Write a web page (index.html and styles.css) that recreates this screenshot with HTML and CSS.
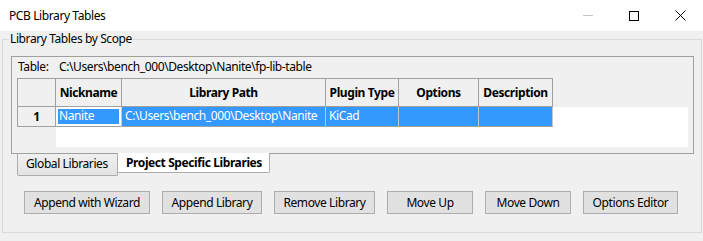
FILE: index.html
```html
<!DOCTYPE html>
<html>
<head>
<meta charset="utf-8">
<title>PCB Library Tables</title>
<link rel="stylesheet" href="styles.css">
</head>
<body>
<div class="window">
  <div class="titlebar">
    <span class="title">PCB Library Tables</span>
    <div class="controls">
      <span class="ctl"><svg width="10" height="1" viewBox="0 0 10 1"><rect width="10" height="1" fill="#c4c4c4"/></svg></span>
      <span class="ctl"><svg width="10" height="10" viewBox="0 0 10 10"><rect x="0.5" y="0.5" width="9" height="9" fill="none" stroke="#000" stroke-width="1"/></svg></span>
      <span class="ctl"><svg width="11" height="11" viewBox="0 0 11 11"><path d="M0.5 0.5L10.5 10.5M10.5 0.5L0.5 10.5" stroke="#000" stroke-width="1" fill="none"/></svg></span>
    </div>
  </div>
  <fieldset class="scope">
    <legend>Library Tables by Scope</legend>
    <div class="page">
      <div class="table-path"><span class="path-label">Table:</span><span>C:\Users\bench_000\Desktop\Nanite\fp-lib-table</span></div>
      <div class="grid">
        <div class="hdr corner"></div>
        <div class="hdr">Nickname</div>
        <div class="hdr">Library Path</div>
        <div class="hdr">Plugin Type</div>
        <div class="hdr">Options</div>
        <div class="hdr">Description</div>
        <div class="hdr-fill"></div>
        <div class="rowlabel">1</div>
        <div class="cell sel cursor">Nanite</div>
        <div class="cell sel">C:\Users\bench_000\Desktop\Nanite</div>
        <div class="cell sel">KiCad</div>
        <div class="cell sel"></div>
        <div class="cell sel"></div>
        <div class="row-fill"></div>
        <div class="label-fill"></div>
        <div class="empty"></div>
      </div>
    </div>
    <div class="tabs">
      <div class="tab tab-global">Global Libraries</div>
      <div class="tab tab-project active">Project Specific Libraries</div>
    </div>
    <div class="buttons">
      <button class="btn btn-wizard">Append with Wizard</button>
      <button class="btn btn-append">Append Library</button>
      <button class="btn btn-remove">Remove Library</button>
      <button class="btn btn-up">Move Up</button>
      <button class="btn btn-down">Move Down</button>
      <button class="btn btn-options">Options Editor</button>
    </div>
  </fieldset>
</div>
</body>
</html>
```
FILE: styles.css
```css
* { box-sizing: border-box; }
html, body { margin: 0; padding: 0; }
body {
  background: #f0f0f0;
  font-family: "Noto Sans", "Open Sans", sans-serif;
  font-size: 12px;
  letter-spacing: -0.4px;
  color: #000;
  width: 703px;
  height: 241px;
  overflow: hidden;
}
.window { width: 703px; height: 241px; }
.titlebar {
  height: 31px;
  background: #fff;
  display: flex;
  align-items: center;
  justify-content: space-between;
}
.title { padding-left: 9px; line-height: 16px; }
.controls { display: flex; height: 31px; }
.ctl {
  width: 46px;
  height: 31px;
  display: flex;
  align-items: center;
  justify-content: center;
}
.ctl svg { display: block; }

.scope {
  margin: 0 0 0 2px;
  width: 700px;
  padding: 0 0 18px 0;
  border: 1px solid #d9d9d9;
  min-width: 0;
}
.scope legend {
  margin-left: 6px;
  padding: 0 1px;
  line-height: 16px;
}
.page {
  margin: 9px 7px 0 8px;
  border: 1px solid #a0a0a0;
  padding: 0 5px 6px 5px;
}
.table-path {
  height: 21px;
  line-height: 20px;
  display: flex;
  padding-left: 1px;
}
.path-label { width: 41px; }

.grid {
  display: grid;
  grid-template-columns: 39px 66px 204px 73px 80px 74px 1fr;
  grid-template-rows: 29px 20px 1fr;
  height: 69px;
  background: #fff;
}
.hdr {
  background: #f0f0f0;
  border-top: 1px solid #a0a0a0;
  border-right: 1px solid #a0a0a0;
  border-bottom: 1px solid #a0a0a0;
  font-weight: bold;
  text-align: center;
  line-height: 27px;
  white-space: nowrap;
}
.hdr.corner { border-left: 1px solid #a0a0a0; }
.hdr-fill { background: #f0f0f0; }
.rowlabel {
  background: #f0f0f0;
  border-left: 1px solid #a0a0a0;
  border-right: 1px solid #a0a0a0;
  border-bottom: 1px solid #a0a0a0;
  font-weight: bold;
  text-align: center;
  line-height: 19px;
}
.cell {
  border-right: 1px solid #c0c8d4;
  border-bottom: 1px solid #a0a0a0;
  line-height: 18px;
  padding-left: 3px;
  white-space: nowrap;
  overflow: hidden;
}
.cell.sel { background: #3399ff; color: #fff; }
.cell.cursor { box-shadow: inset 0 0 0 2px #fff; padding-left: 3px; }
.row-fill { background: #fff; }
.label-fill { background: #f0f0f0; }
.empty { grid-column: 2 / 8; background: #fff; }

.tabs {
  display: flex;
  height: 22px;
  margin-left: 14px;
}
.tab {
  height: 22px;
  border: 1px solid #acacac;
  border-top: none;
  background: linear-gradient(#f0f0f0, #e3e3e3);
  line-height: 20px;
  padding-left: 8px;
  border-radius: 0 0 2px 2px;
  white-space: nowrap;
}
.tab-global { width: 101px; }
.tab-project { width: 153px; margin-left: -1px; }
.tab.active {
  background: #fff;
  font-weight: bold;
  height: 20px;
  margin-top: -1px;
  line-height: 19px;
  position: relative;
}
.buttons {
  display: flex;
  gap: 12px;
  margin: 15px 0 0 21px;
}
.btn {
  height: 23px;
  border: 1px solid #adadad;
  background: #e1e1e1;
  font-family: inherit;
  font-size: 12px;
  letter-spacing: -0.4px;
  color: #000;
  padding: 0;
  margin: 0;
  line-height: 20px;
}
.btn-wizard { width: 126px; }
.btn-append { width: 100px; }
.btn-remove { width: 101px; }
.btn-up { width: 86px; }
.btn-down { width: 86px; }
.btn-options { width: 95px; }
```
